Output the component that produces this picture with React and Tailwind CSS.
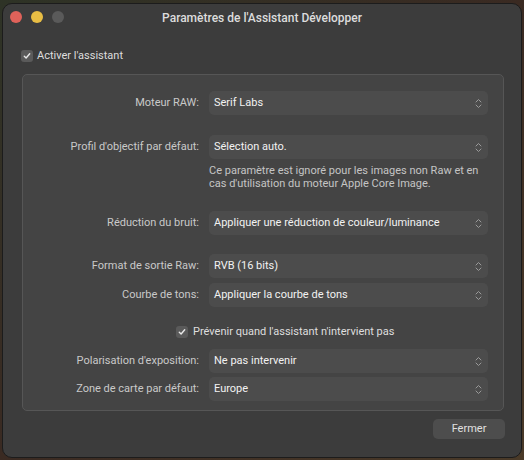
import React from 'react';

const Chevrons = () => (
  <svg width="7" height="11" viewBox="0 0 7 11" fill="none" stroke="#9a9a9a" strokeWidth="1" strokeLinecap="round" strokeLinejoin="round">
    <path d="M1 4 L3.5 1.5 L6 4" />
    <path d="M1 7 L3.5 9.5 L6 7" />
  </svg>
);

const Check = ({ className = '' }) => (
  <span className={`flex items-center justify-center w-[12px] h-[12px] rounded-[3px] bg-[#5a5a5a] ${className}`}>
    <svg width="8" height="8" viewBox="0 0 8 8" fill="none" stroke="#e8e8e8" strokeWidth="1.4" strokeLinecap="round" strokeLinejoin="round">
      <path d="M1.3 4.3 L3.1 6 L6.7 1.8" />
    </svg>
  </span>
);

const Row = ({ label, value, className = '' }) => (
  <div className={`flex items-center h-[24px] ${className}`}>
    <div className="w-[177px] pr-[1px] text-right text-[11px] text-[#c9c9c9] whitespace-nowrap">{label}</div>
    <div className="ml-[9px] flex-1 h-full flex items-center justify-between rounded-[5px] bg-[#4c4c4c] pl-[5px] pr-[6px]">
      <span className="text-[11px] text-[#f2f2f2] whitespace-nowrap">{value}</span>
      <Chevrons />
    </div>
  </div>
);

export default function App() {
  return (
    <div className="w-[524px] h-[460px] overflow-hidden bg-gradient-to-br from-[#2e3326] via-[#3a2a22] to-[#4a3a28] pt-[3px] pl-[2px]" style={{ fontFamily: 'Roboto, "Noto Sans", sans-serif' }}>
      <div className="w-[520px] h-[455px] rounded-[10px] bg-[#3c3c3c] border border-[#1c1c1c] flex flex-col">
        <div className="relative h-[27px] flex items-center justify-center">
          <div className="absolute left-[7px] top-[7px] flex gap-[9px]">
            <span className="w-[12px] h-[12px] rounded-full bg-[#e0625a]" />
            <span className="w-[12px] h-[12px] rounded-full bg-[#e8bd44]" />
            <span className="w-[12px] h-[12px] rounded-full bg-[#5a5a5a]" />
          </div>
          <span className="text-[12px] font-medium text-[#dcdcdc] mt-[1px] whitespace-nowrap">Paramètres de l'Assistant Développer</span>
        </div>

        <div className="mt-[17px] ml-[18px] flex items-center gap-[4px] h-[16px]">
          <Check />
          <span className="text-[11px] text-[#dedede]">Activer l'assistant</span>
        </div>

        <div className="mt-[10px] ml-[19px] mr-[17px] h-[337px] rounded-[5px] border border-[#565656] bg-[#444444] pr-[15px] flex flex-col">
          <Row className="mt-[16px]" label="Moteur RAW:" value="Serif Labs" />
          <Row className="mt-[20px]" label="Profil d'objectif par défaut:" value="Sélection auto." />
          <div className="ml-[186px] mt-[5px] text-[11px] leading-[13px] text-[#c4c4c4] whitespace-nowrap">
            Ce paramètre est ignoré pour les images non Raw et en<br />cas d'utilisation du moteur Apple Core Image.
          </div>
          <Row className="mt-[21px]" label="Réduction du bruit:" value="Appliquer une réduction de couleur/luminance" />
          <Row className="mt-[19px]" label="Format de sortie Raw:" value="RVB (16 bits)" />
          <Row className="mt-[5px]" label="Courbe de tons:" value="Appliquer la courbe de tons" />
          <div className="mt-[19px] ml-[153px] flex items-center gap-[5px] h-[12px]">
            <Check />
            <span className="text-[11px] text-[#dedede] whitespace-nowrap">Prévenir quand l'assistant n'intervient pas</span>
          </div>
          <Row className="mt-[11px]" label="Polarisation d'exposition:" value="Ne pas intervenir" />
          <Row className="mt-[4px]" label="Zone de carte par défaut:" value="Europe" />
        </div>

        <div className="mt-[8px] mr-[16px] flex justify-end">
          <button className="w-[72px] h-[20px] rounded-[5px] bg-[#4d4d4d] text-[11px] text-[#e0e0e0]">Fermer</button>
        </div>
      </div>
    </div>
  );
}
